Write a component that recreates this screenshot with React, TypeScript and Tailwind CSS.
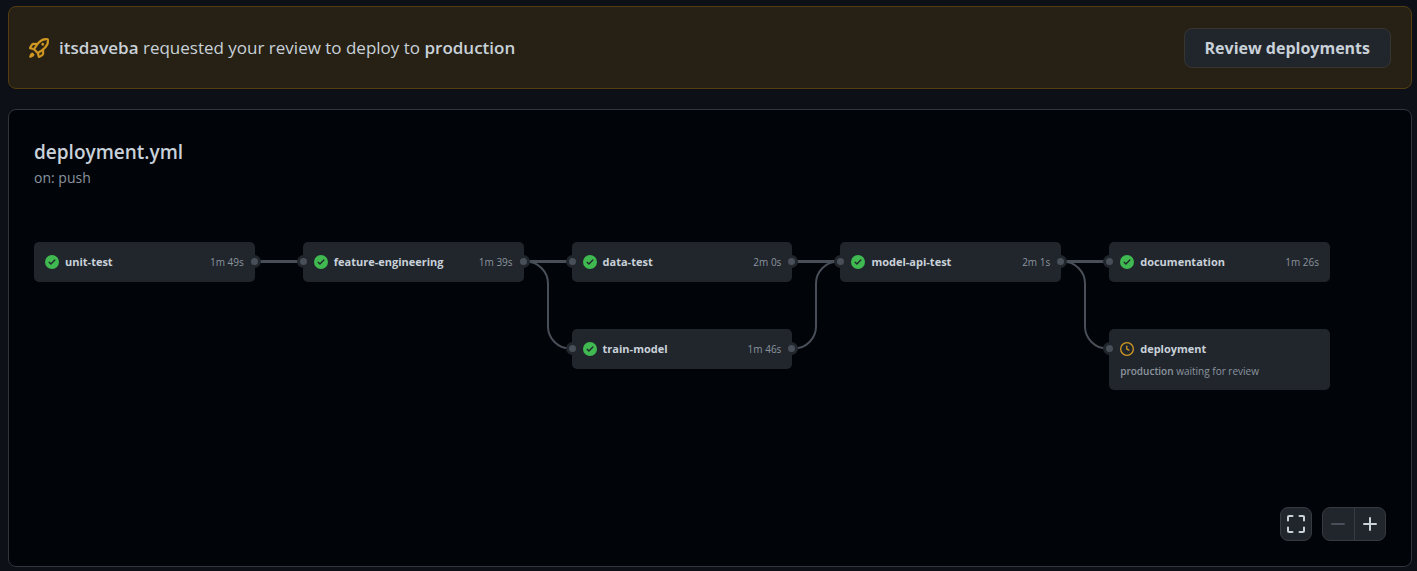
import React from "react";

type Job = { name: string; time?: string; note?: [string, string]; left?: boolean; right?: boolean };

const columns: { jobs: Job[]; link?: "straight" | "split" | "merge" }[] = [
  { jobs: [{ name: "unit-test", time: "1m 49s", right: true }], link: "straight" },
  { jobs: [{ name: "feature-engineering", time: "1m 39s", left: true, right: true }], link: "split" },
  {
    jobs: [
      { name: "data-test", time: "2m 0s", left: true, right: true },
      { name: "train-model", time: "1m 46s", left: true, right: true },
    ],
    link: "merge",
  },
  { jobs: [{ name: "model-api-test", time: "2m 1s", left: true, right: true }], link: "split" },
  {
    jobs: [
      { name: "documentation", time: "1m 26s", left: true },
      { name: "deployment", note: ["production", "waiting for review"], left: true },
    ],
  },
];

const paths = {
  straight: "M0 19.5H48",
  split: "M0 19.5H2C14 19.5 24 29.5 24 41.5V84.5C24 96.5 34 106.5 46 106.5H48",
  merge: "M0 106.5H2C14 106.5 24 96.5 24 84.5V41.5C24 29.5 34 19.5 46 19.5H48",
};

function Icon({ d, className }: { d: string; className: string }) {
  return (
    <svg viewBox="0 0 16 16" fill="currentColor" className={className} aria-hidden="true">
      <path d={d} />
    </svg>
  );
}

const rocket =
  "M14.064 0h.186C15.216 0 16 .784 16 1.75v.186a8.752 8.752 0 0 1-2.564 6.186l-.458.459c-.314.314-.641.616-.979.904v3.207c0 .608-.315 1.172-.833 1.49l-2.774 1.707a.749.749 0 0 1-1.11-.418l-.954-3.102a1.214 1.214 0 0 1-.145-.125L3.754 9.816a1.218 1.218 0 0 1-.124-.145L.528 8.717a.749.749 0 0 1-.418-1.11l1.71-2.774A1.748 1.748 0 0 1 3.31 4h3.204c.288-.338.59-.665.904-.979l.459-.458A8.749 8.749 0 0 1 14.064 0ZM8.938 3.623h-.002l-.458.458c-.76.76-1.437 1.598-2.02 2.5l-1.5 2.317 2.143 2.143 2.317-1.5c.902-.583 1.74-1.26 2.499-2.02l.459-.458a7.25 7.25 0 0 0 2.123-5.127V1.75a.25.25 0 0 0-.25-.25h-.186a7.249 7.249 0 0 0-5.125 2.123ZM3.56 14.56c-.732.732-2.334 1.045-3.005 1.148a.234.234 0 0 1-.201-.064.234.234 0 0 1-.064-.201c.103-.671.416-2.273 1.15-3.003a1.502 1.502 0 1 1 2.12 2.12Zm6.94-3.935c-.088.06-.177.118-.266.175l-2.35 1.521.548 1.783 1.949-1.2a.25.25 0 0 0 .119-.213ZM3.678 8.116 5.2 5.766c.058-.09.117-.178.176-.266H3.309a.25.25 0 0 0-.213.119l-1.2 1.95ZM12 5a1 1 0 1 1-2 0 1 1 0 0 1 2 0Z";
const check =
  "M8 16A8 8 0 1 1 8 0a8 8 0 0 1 0 16Zm3.78-9.72a.751.751 0 0 0-.018-1.042.751.751 0 0 0-1.042-.018L6.75 9.19 5.28 7.72a.751.751 0 0 0-1.042.018.751.751 0 0 0-.018 1.042l2 2a.75.75 0 0 0 1.06 0Z";
const clock =
  "M8 0a8 8 0 1 1 0 16A8 8 0 0 1 8 0ZM1.5 8a6.5 6.5 0 1 0 13 0 6.5 6.5 0 0 0-13 0Zm7-3.25v2.992l2.028.812a.75.75 0 0 1-.557 1.392l-2.5-1A.751.751 0 0 1 7 8.25v-3.5a.75.75 0 0 1 1.5 0Z";

function Port({ side }: { side: "left" | "right" }) {
  return (
    <span
      className={`absolute top-[13px] z-10 size-[13px] rounded-full border-3 border-[#21262d] bg-[#484f58] ${
        side === "left" ? "-left-[6px]" : "-right-[6px]"
      }`}
    />
  );
}

function JobCard({ job }: { job: Job }) {
  return (
    <li className="relative rounded-[5px] bg-[#21262d] px-[11px]">
      {job.left && <Port side="left" />}
      {job.right && <Port side="right" />}
      <a href="#job" className="flex h-10 items-center">
        {job.note ? (
          <Icon d={clock} className="size-[14px] shrink-0 text-[#d29922]" />
        ) : (
          <Icon d={check} className="size-[14px] shrink-0 text-[#3fb950]" />
        )}
        <span className="ml-[6px] flex-1 text-[11px] font-bold whitespace-nowrap text-[#c9d1d9]">{job.name}</span>
        {job.time && <span className="text-[10px] whitespace-nowrap text-[#8b949e]">{job.time}</span>}
      </a>
      {job.note && (
        <p className="-mt-[5px] pb-3 text-[10px] leading-[14px] text-[#8b949e]">
          <span className="font-semibold">{job.note[0]}</span> {job.note[1]}
        </p>
      )}
    </li>
  );
}

export default function App() {
  return (
    <div className="flex min-h-screen flex-col gap-5 bg-[#0d1117] pt-[6px] pr-[5px] pb-1 pl-2 font-['Open_Sans',sans-serif] text-[#c9d1d9]">
      <section className="flex items-center rounded-lg border border-[#533d11] bg-[#272115] px-5 pt-[21px] pb-5">
        <Icon d={rocket} className="size-5 shrink-0 stroke-current stroke-[0.3] text-[#d29922]" />
        <p className="ml-[10px] flex-1 text-[17px] leading-6">
          <strong className="font-semibold">itsdaveba</strong> requested your review to deploy to{" "}
          <strong className="font-semibold">production</strong>
        </p>
        <button className="h-10 rounded-lg border border-[#36352f] bg-[#21262d] px-5 text-base font-bold">
          Review deployments
        </button>
      </section>

      <main className="flex flex-1 flex-col rounded-lg border border-[#30363d] bg-[#010409] px-[25px] pt-7 pb-[25px]">
        <h1 className="text-[19px] leading-7 font-semibold">deployment.yml</h1>
        <p className="text-sm leading-6 text-[#8b949e]">on: push</p>

        <div className="mt-[52px] mr-14 grid grid-cols-5 items-start gap-12">
          {columns.map((col, i) => (
            <div key={i} className="relative">
              <ul className="flex flex-col gap-[47px]">
                {col.jobs.map((job) => (
                  <JobCard key={job.name} job={job} />
                ))}
              </ul>
              {col.link && (
                <svg
                  className="absolute top-0 left-full h-[120px] w-12"
                  viewBox="0 0 48 120"
                  fill="none"
                  stroke="#484f58"
                  strokeWidth="2"
                  aria-hidden="true"
                >
                  <path d={paths.straight} strokeWidth="3" />
                  {col.link !== "straight" && <path d={paths[col.link]} />}
                </svg>
              )}
            </div>
          ))}
        </div>

        <div className="mt-auto flex justify-end gap-[10px]">
          <button
            aria-label="Full screen"
            className="flex h-[34px] w-8 items-center justify-center rounded-lg border border-[#363b42] bg-[#21262d]"
          >
            <svg viewBox="0 0 18 18" className="size-[18px]" fill="none" stroke="currentColor" strokeWidth="2" strokeLinecap="round">
              <path d="M1 5.5V2a1 1 0 0 1 1-1H5.5M12.5 1H16a1 1 0 0 1 1 1V5.5M17 12.5V16a1 1 0 0 1-1 1H12.5M5.5 17H2a1 1 0 0 1-1-1V12.5" />
            </svg>
          </button>
          <div className="flex h-[34px] w-16 overflow-hidden rounded-lg border border-[#363b42] bg-[#21262d]">
            <button aria-label="Zoom out" disabled className="flex flex-1 items-center justify-center border-r border-[#363b42] text-[#484f58]">
              <svg viewBox="0 0 16 16" className="size-4" stroke="currentColor" strokeWidth="2" strokeLinecap="round">
                <path d="M2 8H14" />
              </svg>
            </button>
            <button aria-label="Zoom in" className="flex flex-1 items-center justify-center">
              <svg viewBox="0 0 16 16" className="size-4" stroke="currentColor" strokeWidth="2" strokeLinecap="round">
                <path d="M2 8H14M8 2V14" />
              </svg>
            </button>
          </div>
        </div>
      </main>
    </div>
  );
}
